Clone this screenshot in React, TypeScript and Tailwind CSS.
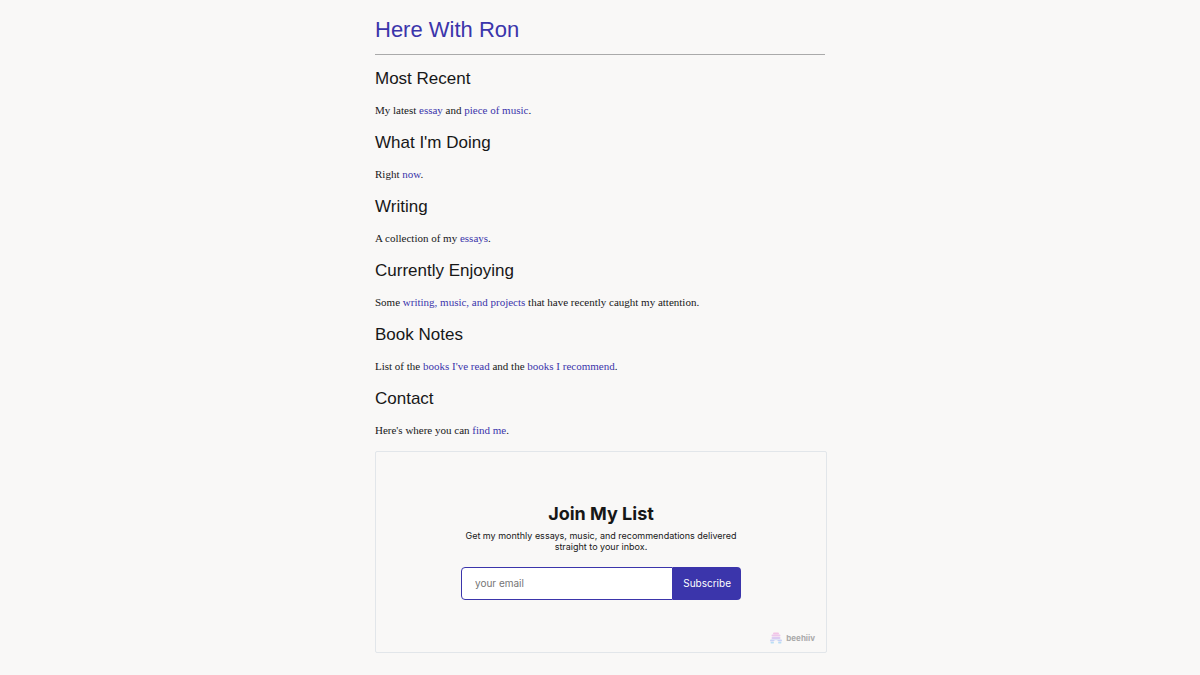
import type { ReactNode } from "react"

function A({ children }: { children: ReactNode }) {
  return <a href="#" className="text-[#3b35ab]">{children}</a>
}

function Section({ title, children }: { title: string; children: ReactNode }) {
  return (
    <section>
      <h2 className="mb-[11px] text-[17px] leading-5 font-['Liberation_Sans',Arial,sans-serif]">{title}</h2>
      <p className="mb-[13px] text-[11px] leading-5">{children}</p>
    </section>
  )
}

function BeehiivMark() {
  return (
    <svg width="12" height="12" viewBox="0 0 24 24" aria-hidden="true">
      <rect x="6" y="1" width="12" height="4" rx="2" fill="#f3c4e6" />
      <rect x="3" y="5" width="18" height="4" rx="2" fill="#edc8ec" />
      <rect x="3" y="10" width="18" height="4" rx="2" fill="#dccbf2" />
      <path d="M2 15h20a2 2 0 0 1 0 4h-5q-1-3-5-3t-5 3H2a2 2 0 0 1 0-4z" fill="#c8d2f5" />
      <rect x="1" y="20" width="7" height="3" rx="1.5" fill="#b9dff5" />
      <rect x="16" y="20" width="7" height="3" rx="1.5" fill="#b9dff5" />
    </svg>
  )
}

export default function App() {
  return (
    <div className="min-h-screen bg-[#f9f8f7] text-[#171717] font-['Liberation_Serif','Times_New_Roman',serif]">
      <main className="mx-auto w-full max-w-[450px] pt-4">
        <h1 className="text-[22px] leading-7 font-['Liberation_Sans',Arial,sans-serif]">
          <A>Here With Ron</A>
        </h1>
        <hr className="mt-2.5 mb-3.5 border-t border-[#aaa]" />

        <Section title="Most Recent">
          My latest <A>essay</A> and <A>piece of music</A>.
        </Section>
        <Section title="What I'm Doing">
          Right <A>now</A>.
        </Section>
        <Section title="Writing">
          A collection of my <A>essays</A>.
        </Section>
        <Section title="Currently Enjoying">
          Some <A>writing, music, and projects</A> that have recently caught my attention.
        </Section>
        <Section title="Book Notes">
          List of the <A>books I've read</A> and the <A>books I recommend</A>.
        </Section>
        <Section title="Contact">
          Here's where you can <A>find me</A>.
        </Section>

        <div className="-mt-0.5 -mr-0.5 rounded-xs border border-[#e2e6ea] px-[11px] pt-12 pb-2 font-[Inter,sans-serif]">
          <h3 className="text-center text-[18px] leading-7 font-bold">Join My List</h3>
          <p className="mx-auto mt-0.5 max-w-[280px] text-center text-[9px] leading-[11px]">
            Get my monthly essays, music, and recommendations delivered straight to your inbox.
          </p>
          <form className="mx-auto mt-[15px] flex h-[33px] max-w-[280px]" onSubmit={(e) => e.preventDefault()}>
            <input
              type="email"
              aria-label="your email"
              placeholder="your email"
              className="min-w-0 flex-1 rounded-l border border-[#3b35ab] bg-white px-[13px] text-[10px] placeholder-[#757575]"
            />
            <button className="rounded-r bg-[#3b35ab] px-2.5 text-[10px] text-white">Subscribe</button>
          </form>
          <a href="#" className="mt-8 flex items-center justify-end gap-1 text-[8px] font-bold text-[#aaa]">
            <BeehiivMark />
            beehiiv
          </a>
        </div>
      </main>
    </div>
  )
}
